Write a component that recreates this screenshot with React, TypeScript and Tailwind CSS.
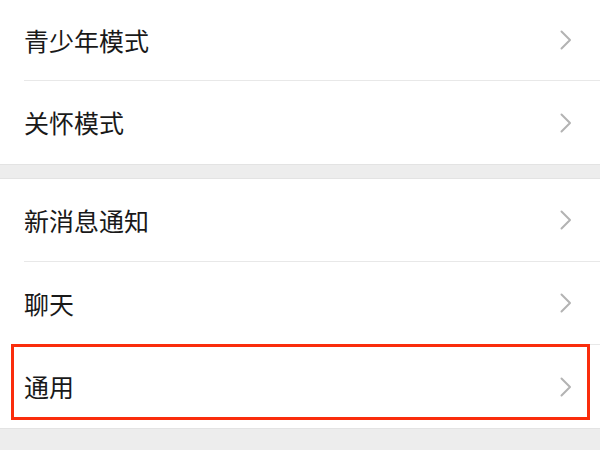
const groups: string[][] = [
  ['青少年模式', '关怀模式'],
  ['新消息通知', '聊天', '通用'],
]

function Chevron() {
  return (
    <svg width="12" height="20" viewBox="0 0 12 20" fill="none" className="shrink-0">
      <path d="M1.5 1.5 L10 10 L1.5 18.5" stroke="#b3b3b3" strokeWidth="2" strokeLinecap="round" strokeLinejoin="round" />
    </svg>
  )
}

function Row({ label, last, tall }: { label: string; last: boolean; tall: boolean }) {
  return (
    <div className="pl-6">
      <div className={`flex items-center justify-between pr-[28px] ${tall ? 'h-[83px]' : 'h-[81px]'} ${last ? '' : 'border-b border-[#e8e8e8]'}`}>
        <span className="text-[25px] leading-none text-[#191919]">{label}</span>
        <Chevron />
      </div>
    </div>
  )
}

export default function App() {
  return (
    <div className="relative w-[600px] h-[450px] overflow-hidden bg-[#ededed]" style={{ fontFamily: "'Noto Sans CJK SC', 'Noto Sans', sans-serif" }}>
      {groups.map((items, gi) => (
        <div key={gi} className={`bg-white ${gi > 0 ? 'mt-[13px] border-t border-[#e3e3e3]' : ''} border-b border-[#e3e3e3]`}>
          {items.map((label, i) => (
            <Row key={label} label={label} last={i === items.length - 1} tall={gi > 0 || i > 0} />
          ))}
        </div>
      ))}
      <div className="absolute left-[11px] top-[344px] w-[579px] h-[76px] border-[3px] border-[#fa2d0c]" />
    </div>
  )
}
